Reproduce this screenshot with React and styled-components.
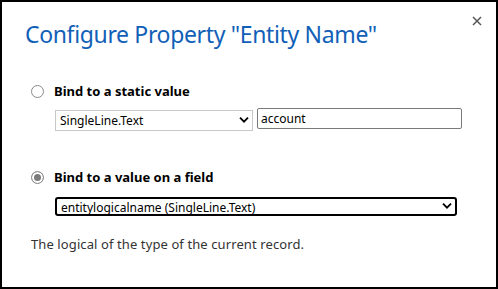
import styled, { createGlobalStyle } from "styled-components";

const GlobalStyle = createGlobalStyle`
  html, body {
    margin: 0;
    padding: 0;
    background: #fff;
  }
  * {
    box-sizing: border-box;
  }
`;

const Dialog = styled.div`
  width: 498px;
  height: 289px;
  border: 2px solid #000;
  background: #fff;
  padding: 16px 0 0 23px;
  font-family: "Segoe UI", "Noto Sans", "Open Sans", sans-serif;
  color: #000;
`;

const Header = styled.div`
  display: flex;
  justify-content: space-between;
  align-items: flex-start;
`;

const Title = styled.h1`
  margin: 0;
  font-size: 23px;
  font-weight: 400;
  line-height: 32px;
  color: #1160b7;
  letter-spacing: -0.35px;
`;

const CloseButton = styled.button`
  border: none;
  background: none;
  padding: 0;
  margin: -4px 12px 0 0;
  width: 14px;
  height: 14px;
  display: flex;
  align-items: center;
  justify-content: center;
  cursor: pointer;
`;

const Section = styled.div`
  margin-top: ${({ $top }) => $top}px;
  padding-left: 6px;
`;

const RadioRow = styled.label`
  display: flex;
  align-items: center;
  gap: 10px;
  font-size: 13px;
  font-weight: 700;
  line-height: 18px;
`;

const Radio = styled.input.attrs({ type: "radio" })`
  appearance: none;
  margin: 0;
  width: 13px;
  height: 13px;
  border: 1px solid #8a8a8a;
  border-radius: 50%;
  background: #fff;

  &:checked {
    border-color: #8f8f8f;
    background: #7a7a7a;
    box-shadow: inset 0 0 0 2px #fff;
  }
`;

const Controls = styled.div`
  display: flex;
  gap: 4px;
  margin: ${({ $top }) => $top}px 0 0 24px;
`;

const SelectWrap = styled.div`
  position: relative;
  width: ${({ $width }) => $width}px;
`;

const Select = styled.select`
  appearance: none;
  width: 100%;
  height: ${({ $height }) => $height}px;
  margin: 0;
  padding: 0 20px 0 4px;
  font-family: inherit;
  font-size: 12px;
  color: #000;
  background: #fff;
  border: ${({ $focused }) => ($focused ? "2px solid #000" : "1px solid #c8c8c8")};
  border-radius: ${({ $focused }) => ($focused ? "3px" : "0")};
  outline: none;
`;

const Chevron = styled.svg`
  position: absolute;
  right: ${({ $right }) => $right}px;
  top: 50%;
  transform: translateY(-50%);
  pointer-events: none;
`;

const TextInput = styled.input`
  width: 205px;
  height: 21px;
  margin: 0;
  padding: 0 3px;
  font-family: inherit;
  font-size: 12px;
  color: #000;
  border: 1px solid #7a7a7a;
  border-radius: 2px;
  outline: none;
`;

const Description = styled.p`
  margin: 18px 0 0 6px;
  font-size: 13px;
  line-height: 18px;
  letter-spacing: 0.1px;
  color: #333;
`;

const ChevronIcon = ({ right }) => (
  <Chevron $right={right} width="10" height="7" viewBox="0 0 10 7">
    <path d="M1 1.2 L5 5.2 L9 1.2" fill="none" stroke="#000" strokeWidth="1.8" />
  </Chevron>
);

const App = () => {
  return (
    <>
      <GlobalStyle />
      <Dialog>
        <Header>
          <Title>Configure Property "Entity Name"</Title>
          <CloseButton aria-label="Close">
            <svg width="10" height="10" viewBox="0 0 10 10">
              <path d="M1 1 L9 9 M9 1 L1 9" stroke="#555" strokeWidth="1.5" />
            </svg>
          </CloseButton>
        </Header>

        <Section $top={32}>
          <RadioRow>
            <Radio name="bind" />
            Bind to a static value
          </RadioRow>
          <Controls $top={8}>
            <SelectWrap $width={198}>
              <Select $height={21} defaultValue="SingleLine.Text">
                <option>SingleLine.Text</option>
              </Select>
              <ChevronIcon right={4} />
            </SelectWrap>
            <TextInput defaultValue="account" />
          </Controls>
        </Section>

        <Section $top={37}>
          <RadioRow>
            <Radio name="bind" defaultChecked />
            Bind to a value on a field
          </RadioRow>
          <Controls $top={9}>
            <SelectWrap $width={402}>
              <Select $height={19} $focused defaultValue="entitylogicalname">
                <option value="entitylogicalname">entitylogicalname (SingleLine.Text)</option>
              </Select>
              <ChevronIcon right={5} />
            </SelectWrap>
          </Controls>
        </Section>

        <Description>The logical of the type of the current record.</Description>
      </Dialog>
    </>
  );
};

export default App;
